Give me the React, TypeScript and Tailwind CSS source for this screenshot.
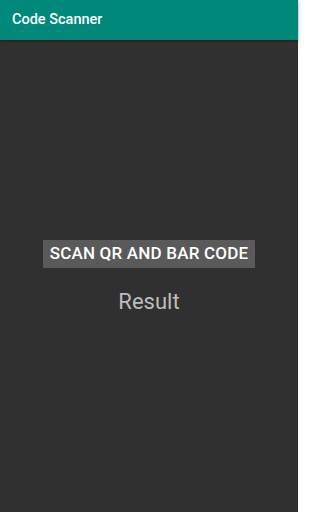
export default function App() {
  return (
    <div className="flex h-[512px] w-[298px] flex-col bg-[#303030] font-['Roboto',sans-serif]">
      <header className="flex h-10 items-center bg-[#00897b] px-3 shadow-[0_1px_3px_rgba(0,0,0,0.4)]">
        <span className="text-[14.5px] font-medium text-white">Code Scanner</span>
      </header>
      <main className="flex flex-1 flex-col items-center pt-[200px]">
        <button className="flex h-7 w-[212px] items-center justify-center bg-[#5a5a5a] text-[17px] font-medium tracking-[0.2px] text-white">
          SCAN QR AND BAR CODE
        </button>
        <p className="mt-[20px] text-[22px] leading-[28px] text-[#bdbdbd]">Result</p>
      </main>
    </div>
  );
}
